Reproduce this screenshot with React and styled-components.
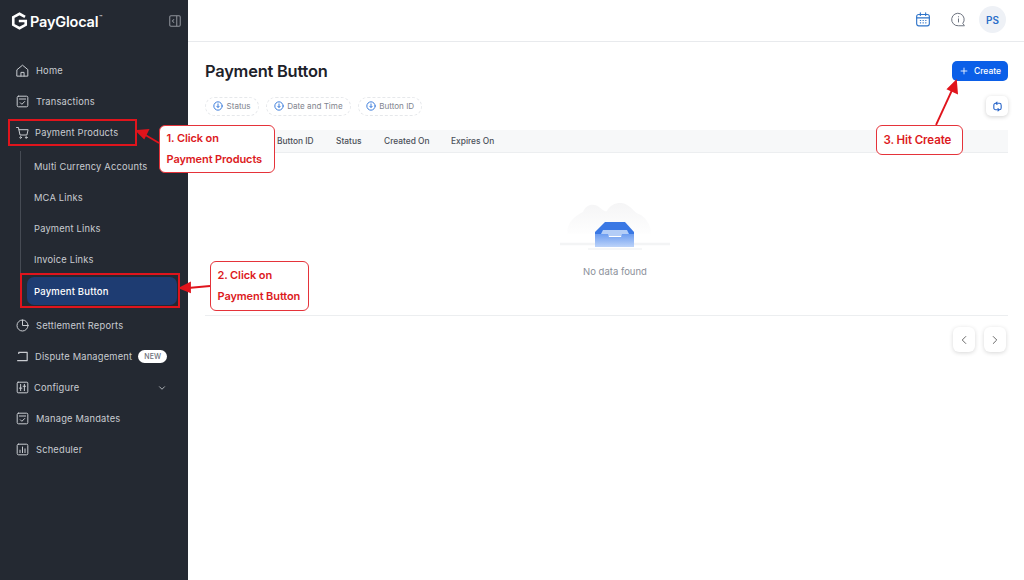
import React from 'react';
import styled, { createGlobalStyle } from 'styled-components';
import { ChevronDown, ChevronLeft, ChevronRight, Plus } from 'lucide-react';

const GlobalStyle = createGlobalStyle`
  html, body { margin: 0; padding: 0; background: #fff; }
  body { font-family: Inter, "Liberation Sans", sans-serif; }
  * { box-sizing: border-box; }
`;

const Page = styled.div`
  position: relative;
  display: flex;
  width: 1024px;
  height: 580px;
  overflow: hidden;
`;

const Sidebar = styled.aside`
  width: 188px;
  flex-shrink: 0;
  background: #242932;
  color: #c9ccd1;
`;

const LogoRow = styled.div`
  display: flex;
  align-items: center;
  justify-content: space-between;
  height: 42px;
  padding: 0 6px 0 11px;
  margin-bottom: 13px;
`;

const Logo = styled.div`
  display: flex;
  align-items: center;
  gap: 2px;
  color: #fff;
  font-size: 14.5px;
  font-weight: 600;
  letter-spacing: -0.2px;
`;

const TradeMark = styled.sup`
  margin: -8px 0 0 -1px;
  font-size: 5px;
  font-weight: 400;
`;

const Nav = styled.nav`
  display: flex;
  flex-direction: column;
`;

const NavItem = styled.div`
  display: flex;
  align-items: center;
  gap: ${p => p.$gap ?? 6}px;
  height: 31px;
  padding: 0 21px 0 15px;
  font-size: 9.3px;
  letter-spacing: 0.2px;

  svg {
    flex-shrink: 0;
  }
`;

const NavLabel = styled.span`
  flex: ${p => (p.$grow ? 1 : 'none')};
`;

const NewBadge = styled.span`
  margin-left: 1px;
  padding: 2px 6px;
  border-radius: 8px;
  background: #fff;
  color: #6b7079;
  font-size: 7px;
  font-weight: 500;
`;

const SubList = styled.div`
  display: flex;
  flex-direction: column;
  margin: 3px 0 4px 20px;
  border-left: 1px solid #464b54;
`;

const SubItem = styled.div`
  display: flex;
  align-items: center;
  height: ${p => (p.$active ? '28px' : '31px')};
  margin: ${p => (p.$active ? '2px 11px 1px 6px' : '0 11px 0 6px')};
  padding-left: 7px;
  border-radius: 7px;
  background: ${p => (p.$active ? '#1e3c72' : 'transparent')};
  color: ${p => (p.$active ? '#fff' : '#c9ccd1')};
  font-size: ${p => (p.$active ? '9.5px' : '9.3px')};
  font-weight: ${p => (p.$active ? 500 : 400)};
  letter-spacing: 0.2px;
`;

const Main = styled.main`
  flex: 1;
  min-width: 0;
  display: flex;
  flex-direction: column;
`;

const TopBar = styled.header`
  display: flex;
  align-items: center;
  justify-content: flex-end;
  gap: 13px;
  height: 42px;
  padding: 0 18px 2px 0;
  border-bottom: 1px solid #e8eaed;
`;

const CalendarSlot = styled.div`
  display: flex;
  margin-right: 7px;
`;

const Avatar = styled.div`
  display: flex;
  align-items: center;
  justify-content: center;
  width: 27px;
  height: 27px;
  border-radius: 50%;
  background: #eef1f6;
  color: #2a6fc9;
  font-size: 10px;
  font-weight: 600;
`;

const Content = styled.div`
  padding: 19px 16px 0 17px;
`;

const TitleRow = styled.div`
  display: flex;
  align-items: center;
  justify-content: space-between;
  height: 20px;
`;

const Title = styled.h1`
  margin: 0;
  color: #1d2129;
  font-size: 16.4px;
  font-weight: 600;
  letter-spacing: -0.2px;
`;

const CreateButton = styled.button`
  display: flex;
  align-items: center;
  gap: 5px;
  width: 56px;
  height: 20px;
  padding: 0 0 0 7px;
  border: none;
  border-radius: 5px;
  background: #0b5fe8;
  color: #fff;
  font-family: inherit;
  font-size: 8.5px;
  font-weight: 500;
`;

const FilterRow = styled.div`
  display: flex;
  align-items: center;
  justify-content: space-between;
  margin-top: 15px;
`;

const Chips = styled.div`
  display: flex;
  gap: 7px;
`;

const Chip = styled.div`
  display: flex;
  align-items: center;
  gap: 3.5px;
  height: 19px;
  padding: 0 7px;
  border: 1px dashed #e6e8eb;
  border-radius: 10px;
  color: #7f848e;
  font-size: 8.1px;
`;

const RefreshButton = styled.div`
  display: flex;
  align-items: center;
  justify-content: center;
  width: 22px;
  height: 20px;
  border-radius: 5px;
  background: #fff;
  box-shadow: 0 1px 4px rgba(0, 0, 0, 0.18);
`;

const TableHead = styled.div`
  display: grid;
  grid-template-columns: 72px 59px 48px 67px 1fr;
  align-items: center;
  height: 23px;
  margin-top: 14px;
  background: #f7f8f9;
  border-bottom: 1px solid #eceef0;
  color: #4a4f58;
  font-size: 8.4px;
  font-weight: 500;
`;

const Empty = styled.div`
  display: flex;
  flex-direction: column;
  align-items: center;
  height: 163px;
  padding: 33px 0 0 17px;
  border-bottom: 1px solid #eceef0;
`;

const EmptyText = styled.div`
  margin-top: 2px;
  color: #8b909a;
  font-size: 9.5px;
`;

const Pager = styled.div`
  display: flex;
  justify-content: flex-end;
  gap: 9px;
  margin-top: 11px;
  padding-right: 2px;
`;

const PagerButton = styled.div`
  display: flex;
  align-items: center;
  justify-content: center;
  width: 22px;
  height: 25px;
  border-radius: 6px;
  background: #fff;
  color: #555;
  box-shadow: 0 1px 4px rgba(0, 0, 0, 0.16);
`;

/* annotations sit on top of the screenshot */
const RedFrame = styled.div`
  position: absolute;
  left: ${p => p.$x}px;
  top: ${p => p.$y}px;
  width: ${p => p.$w}px;
  height: ${p => p.$h}px;
  border: 2px solid #e0141c;
`;

const Callout = styled.div`
  position: absolute;
  left: ${p => p.$x}px;
  top: ${p => p.$y}px;
  width: ${p => p.$w}px;
  height: ${p => p.$h}px;
  display: flex;
  flex-direction: column;
  justify-content: center;
  padding-left: 6.5px;
  border: 1px solid #e5333a;
  border-radius: 6px;
  background: #fff;
  color: #dc1a22;
  font-size: ${p => p.$size ?? 11}px;
  font-weight: 600;
  letter-spacing: -0.1px;
  line-height: 21px;
`;

const ArrowLayer = styled.svg`
  position: absolute;
  left: 0;
  top: 0;
  pointer-events: none;
`;

const iconProps = { width: 15, height: 15, viewBox: '0 0 24 24', fill: 'none', stroke: 'currentColor', strokeWidth: 1.6, strokeLinecap: 'round', strokeLinejoin: 'round' };

const HomeIcon = () => (
  <svg {...iconProps}>
    <path d="M3.5 10.5 12 3.5l8.5 7V21h-17z" />
    <path d="M9.5 21v-6h5v6" />
  </svg>
);
const TaskIcon = () => (
  <svg {...iconProps}>
    <rect x="3.5" y="3.5" width="17" height="17" rx="2" />
    <path d="M7 8h10M8.5 14l2.5 2.5 4.5-4.5" />
  </svg>
);
const CartIcon = () => (
  <svg {...iconProps}>
    <path d="M2.5 4h3l2.5 12h11l2-8.5H6.5" />
    <circle cx="9" cy="20" r="1.3" />
    <circle cx="18" cy="20" r="1.3" />
  </svg>
);
const PieIcon = () => (
  <svg {...iconProps}>
    <circle cx="12" cy="12" r="8.8" />
    <path d="M12 3.2V12h8.8" />
  </svg>
);
const DisputeIcon = () => (
  <svg {...iconProps} strokeWidth="1.9" strokeLinecap="butt">
    <path d="M6 8V5.500h13.500V18.500H3.500" />
  </svg>
);
const ConfigIcon = () => (
  <svg {...iconProps}>
    <rect x="3.5" y="3.5" width="17" height="17" rx="1.5" />
    <path d="M9 7v10M7 13h4M15 7v10M13 10h4" />
  </svg>
);
const ChartIcon = () => (
  <svg {...iconProps}>
    <rect x="3.5" y="3.5" width="17" height="17" rx="2" />
    <path d="M8 17v-4M12 17V8M16 17v-6" />
  </svg>
);

const InfoDown = () => (
  <svg width="10" height="10" viewBox="0 0 24 24" fill="none" stroke="#3f7fdc" strokeWidth="2.4" strokeLinecap="round">
    <circle cx="12" cy="12" r="10" />
    <path d="M12 7v8M9 12.5l3 3 3-3" />
  </svg>
);

const LogoMark = () => (
  <svg width="17" height="18" viewBox="0 0 24 26" fill="none" stroke="#fff" strokeWidth="3.8">
    <path d="M20 7 12 2.5 3 7.5v11l9 5 9-5V13H11" />
  </svg>
);

const CollapseIcon = () => (
  <svg width="14" height="14" viewBox="0 0 24 24" fill="none" stroke="#8d9199" strokeWidth="1.8">
    <rect x="3" y="3" width="18" height="18" rx="2" />
    <path d="M15 3v18M10.5 9l-3 3 3 3" />
  </svg>
);

const CalendarIcon = () => (
  <svg width="16" height="17" viewBox="0 0 24 24" fill="none" stroke="#2f74c9" strokeWidth="1.7" strokeLinecap="round">
    <rect x="2.5" y="4.5" width="19" height="17" rx="3" />
    <path d="M2.5 9.500h19M8 2v4M16 2v4M8 13.500h.5M12 13.500h.5M16 13.500h.5M8 17h.5M12 17h.5M16 17h.5" />
  </svg>
);

const ChatInfoIcon = () => (
  <svg width="15" height="15" viewBox="0 0 24 24" fill="none" stroke="#6e7480" strokeWidth="1.6" strokeLinecap="round">
    <path d="M21 21l-2.200-2.600A10 10 0 1 0 12 22h9" />
    <path d="M12 11v5M12 7.500v.3" />
  </svg>
);

const RefreshIcon = () => (
  <svg width="11" height="11" viewBox="0 0 24 24" fill="none" stroke="#2563c9" strokeWidth="2.4" strokeLinecap="round" strokeLinejoin="round">
    <path d="M9 5h7a4 4 0 0 1 4 4v6a4 4 0 0 1-4 4h-1M15 19H8a4 4 0 0 1-4-4V9a4 4 0 0 1 4-4h1" />
    <path d="M11 2.500 8.500 5 11 7.500M13 16.500l2.500 2.500-2.500 2.500" />
  </svg>
);

const EmptyIllustration = () => (
  <svg width="114" height="78" viewBox="0 0 114 78">
    <defs>
      <linearGradient id="cloud" x1="0" y1="0" x2="0" y2="1">
        <stop offset="0" stopColor="#f5f5f6" />
        <stop offset="1" stopColor="#fefefe" />
      </linearGradient>
      <linearGradient id="tray" x1="0" y1="0" x2="0" y2="1">
        <stop offset="0" stopColor="#6d9df0" />
        <stop offset="1" stopColor="#bcd3f9" />
      </linearGradient>
    </defs>
    <path d="M9 48c0-12 8-18 16-22 3-8 11-9 16-5 3 2 5 5 8 4 4-8 14-10 20-6 5 2 7 8 14 10 6 4 10 11 10 19z" fill="url(#cloud)" />
    <path d="M2 58h110" stroke="#f3f4f5" strokeWidth="2.5" />
    <path d="M47 36h20l9 10v4H37v-4z" fill="#3a78e4" />
    <path d="M45 44h24l3 6H42z" fill="#b3cdf7" />
    <path d="M37 48h13l1 3h12l1-3h12v13H37z" fill="url(#tray)" />
    <path d="M30 63h54" stroke="#f6f7f8" strokeWidth="2" />
  </svg>
);

const topItems = [
  { label: 'Home', icon: <HomeIcon /> },
  { label: 'Transactions', icon: <TaskIcon /> },
  { label: 'Payment Products', icon: <CartIcon />, gap: 5 },
];

const subItems = ['Multi Currency Accounts', 'MCA Links', 'Payment Links', 'Invoice Links'];

const filters = ['Status', 'Date and Time', 'Button ID'];

const columns = ['', 'Button ID', 'Status', 'Created On', 'Expires On'];

const App = () => (
  <Page>
    <GlobalStyle />
    <Sidebar>
      <LogoRow>
        <Logo>
          <LogoMark />
          PayGlocal
          <TradeMark>™</TradeMark>
        </Logo>
        <CollapseIcon />
      </LogoRow>
      <Nav>
        {topItems.map(item => (
          <NavItem key={item.label} $gap={item.gap}>
            {item.icon}
            <NavLabel>{item.label}</NavLabel>
          </NavItem>
        ))}
        <SubList>
          {subItems.map(label => (
            <SubItem key={label}>{label}</SubItem>
          ))}
          <SubItem $active>Payment Button</SubItem>
        </SubList>
        <NavItem>
          <PieIcon />
          <NavLabel>Settlement Reports</NavLabel>
        </NavItem>
        <NavItem $gap={5}>
          <DisputeIcon />
          <NavLabel>Dispute Management</NavLabel>
          <NewBadge>NEW</NewBadge>
        </NavItem>
        <NavItem $gap={4}>
          <ConfigIcon />
          <NavLabel $grow>Configure</NavLabel>
          <ChevronDown size={10} />
        </NavItem>
        <NavItem>
          <TaskIcon />
          <NavLabel>Manage Mandates</NavLabel>
        </NavItem>
        <NavItem>
          <ChartIcon />
          <NavLabel>Scheduler</NavLabel>
        </NavItem>
      </Nav>
    </Sidebar>
    <Main>
      <TopBar>
        <CalendarSlot>
          <CalendarIcon />
        </CalendarSlot>
        <ChatInfoIcon />
        <Avatar>PS</Avatar>
      </TopBar>
      <Content>
        <TitleRow>
          <Title>Payment Button</Title>
          <CreateButton>
            <Plus size={10} strokeWidth={2} />
            Create
          </CreateButton>
        </TitleRow>
        <FilterRow>
          <Chips>
            {filters.map(label => (
              <Chip key={label}>
                <InfoDown />
                {label}
              </Chip>
            ))}
          </Chips>
          <RefreshButton>
            <RefreshIcon />
          </RefreshButton>
        </FilterRow>
        <TableHead>
          {columns.map(col => (
            <div key={col}>{col}</div>
          ))}
        </TableHead>
        <Empty>
          <EmptyIllustration />
          <EmptyText>No data found</EmptyText>
        </Empty>
        <Pager>
          <PagerButton>
            <ChevronLeft size={14} strokeWidth={1.5} />
          </PagerButton>
          <PagerButton>
            <ChevronRight size={14} strokeWidth={1.5} />
          </PagerButton>
        </Pager>
      </Content>
    </Main>

    <ArrowLayer width="1024" height="580" viewBox="0 0 1024 580">
      <g stroke="#e0141c" strokeWidth="1.8" fill="#e0141c">
        <path d="M159 143 142 133" />
        <path d="M137 131l11-1-4 8z" />
        <path d="M210 286 188 288" />
        <path d="M180 288l10-5v9z" />
        <path d="M936 125 953 88" />
        <path d="M956 81l1 12-9-4z" />
      </g>
    </ArrowLayer>
    <RedFrame $x={8} $y={119} $w={129} $h={27} />
    <RedFrame $x={20} $y={273} $w={160} $h={35} />
    <Callout $x={159} $y={125} $w={116} $h={48}>
      <span>1. Click on</span>
      <span>Payment Products</span>
    </Callout>
    <Callout $x={210} $y={261} $w={99} $h={50}>
      <span>2. Click on</span>
      <span>Payment Button</span>
    </Callout>
    <Callout $x={876} $y={125} $w={87} $h={30} $size={11.5}>
      <span>3. Hit Create</span>
    </Callout>
  </Page>
);

export default App;
